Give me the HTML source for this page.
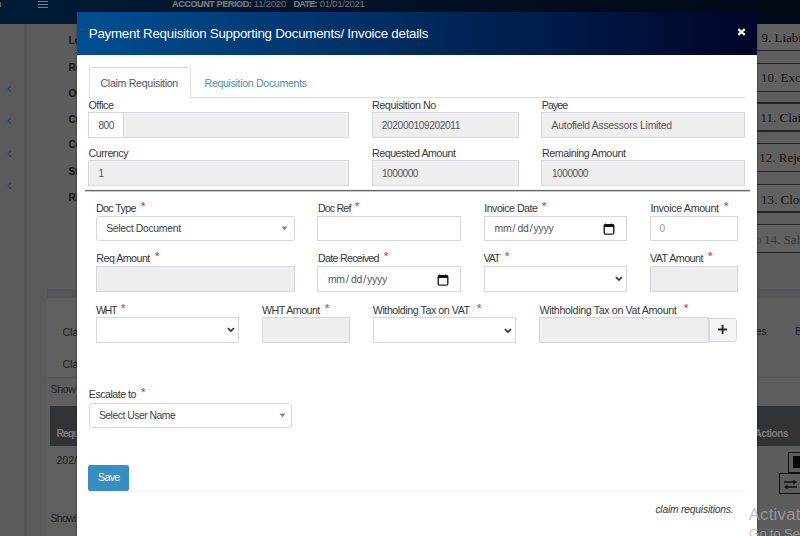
<!DOCTYPE html><html><head><meta charset="utf-8"><style>
*{margin:0;padding:0;box-sizing:border-box}
html,body{width:800px;height:536px;overflow:hidden}
body{position:relative;background:#5d5d5d;font-family:"Liberation Sans",sans-serif;}
div,span,svg{position:absolute;white-space:nowrap}
</style></head><body>
<div style="left:0.00px;top:0.00px;width:800.00px;height:24.00px;background:linear-gradient(to right,#001c36,#020816)"></div>
<div style="left:0.00px;top:24.00px;width:26.00px;height:512.00px;background:#5a5a5a"></div>
<div style="left:24.00px;top:24.00px;width:3.00px;height:512.00px;background:linear-gradient(to right,#585858,#525252,#555657)"></div>
<div style="left:27.00px;top:24.00px;width:20.00px;height:512.00px;background:#5a5b5c"></div>
<svg style="left:7px;top:85.4px" width="5" height="8" viewBox="0 0 5 8"><path d="M3.8 0.8 L1.1 3.8 L3.8 6.8" fill="none" stroke="#34475b" stroke-width="1.2"/></svg>
<svg style="left:7px;top:117.2px" width="5" height="8" viewBox="0 0 5 8"><path d="M3.8 0.8 L1.1 3.8 L3.8 6.8" fill="none" stroke="#34475b" stroke-width="1.2"/></svg>
<svg style="left:7px;top:149.7px" width="5" height="8" viewBox="0 0 5 8"><path d="M3.8 0.8 L1.1 3.8 L3.8 6.8" fill="none" stroke="#34475b" stroke-width="1.2"/></svg>
<svg style="left:7px;top:181.5px" width="5" height="8" viewBox="0 0 5 8"><path d="M3.8 0.8 L1.1 3.8 L3.8 6.8" fill="none" stroke="#34475b" stroke-width="1.2"/></svg>
<div style="left:38.00px;top:1.00px;width:10.00px;height:1.00px;background:#7d7c7a"></div>
<div style="left:38.00px;top:4.00px;width:10.00px;height:1.00px;background:#7d7c7a"></div>
<div style="left:38.00px;top:7.00px;width:10.00px;height:1.00px;background:#7d7c7a"></div>
<div style="left:0.00px;top:1.50px;width:1.20px;height:5.50px;background:#6a5a42"></div>
<div style="left:172.00px;top:-2.00px;font-size:9px;line-height:12px;color:#77787b;font-family:'Liberation Sans',sans-serif;font-weight:bold;letter-spacing:-0.373px;-webkit-text-stroke:0.2px #77787b;">ACCOUNT PERIOD:</div>
<div style="left:253.80px;top:-3.00px;font-size:9.6px;line-height:14px;color:#707277;font-family:'Liberation Sans',sans-serif;letter-spacing:-0.256px;">11/2020</div>
<div style="left:293.50px;top:-2.00px;font-size:9px;line-height:12px;color:#77787b;font-family:'Liberation Sans',sans-serif;font-weight:bold;letter-spacing:-0.726px;-webkit-text-stroke:0.2px #77787b;">DATE:</div>
<div style="left:319.70px;top:-3.00px;font-size:9.6px;line-height:14px;color:#707277;font-family:'Liberation Sans',sans-serif;letter-spacing:-0.305px;">01/01/2021</div>
<div style="left:68.40px;top:34.00px;font-size:10.2px;line-height:14px;color:#161616;font-family:'Liberation Sans',sans-serif;font-weight:bold;">Lo</div>
<div style="left:68.40px;top:61.00px;font-size:10.2px;line-height:14px;color:#161616;font-family:'Liberation Sans',sans-serif;font-weight:bold;">Re</div>
<div style="left:68.40px;top:87.00px;font-size:10.2px;line-height:14px;color:#161616;font-family:'Liberation Sans',sans-serif;font-weight:bold;">Or</div>
<div style="left:68.40px;top:113.00px;font-size:10.2px;line-height:14px;color:#161616;font-family:'Liberation Sans',sans-serif;font-weight:bold;">Cu</div>
<div style="left:68.40px;top:138.00px;font-size:10.2px;line-height:14px;color:#161616;font-family:'Liberation Sans',sans-serif;font-weight:bold;">Co</div>
<div style="left:68.40px;top:165.00px;font-size:10.2px;line-height:14px;color:#161616;font-family:'Liberation Sans',sans-serif;font-weight:bold;">St</div>
<div style="left:68.40px;top:191.00px;font-size:10.2px;line-height:14px;color:#161616;font-family:'Liberation Sans',sans-serif;font-weight:bold;">Ri</div>
<div style="left:47.00px;top:289.30px;width:30.00px;height:8.70px;background:#545658"></div>
<div style="left:47.00px;top:298.00px;width:30.00px;height:238.00px;background:#5f5f5f"></div>
<div style="left:47.00px;top:376.50px;width:30.00px;height:1.00px;background:#555657"></div>
<div style="left:62.50px;top:325.00px;font-size:10.5px;line-height:14px;color:#1e1e1e;font-family:'Liberation Sans',sans-serif;">Cla</div>
<div style="left:62.50px;top:357.00px;font-size:10.5px;line-height:14px;color:#1e1e1e;font-family:'Liberation Sans',sans-serif;">Cla</div>
<div style="left:50.50px;top:382.00px;font-size:10.5px;line-height:14px;color:#222;font-family:'Liberation Sans',sans-serif;letter-spacing:-0.317px;">Show</div>
<div style="left:50.00px;top:406.00px;width:27.00px;height:40.00px;background:#323334"></div>
<div style="left:56.50px;top:426.00px;font-size:10.5px;line-height:14px;color:#7b7c7e;font-family:'Liberation Sans',sans-serif;font-weight:bold;letter-spacing:-1.063px;">Requ</div>
<div style="left:56.50px;top:453.00px;font-size:10.5px;line-height:14px;color:#1e1e1e;font-family:'Liberation Sans',sans-serif;">202/</div>
<div style="left:50.50px;top:511.00px;font-size:10.5px;line-height:14px;color:#222;font-family:'Liberation Sans',sans-serif;letter-spacing:-0.720px;">Showi</div>
<div style="left:757.00px;top:24.00px;width:43.00px;height:228.60px;background:#5e5e5e"></div>
<div style="left:757.00px;top:24.00px;width:43.00px;height:26.35px;background:#616161"></div>
<div style="left:757.00px;top:49.85px;width:43.00px;height:1.20px;background:#242424"></div>
<div style="left:761.50px;top:29.00px;font-size:13px;line-height:18px;color:#121212;font-family:'Liberation Serif',serif;">9. Liabi</div>
<div style="left:757.00px;top:63.20px;width:43.00px;height:28.00px;background:#616161"></div>
<div style="left:757.00px;top:90.70px;width:43.00px;height:1.20px;background:#242424"></div>
<div style="left:757.00px;top:62.70px;width:43.00px;height:1.20px;background:#242424"></div>
<div style="left:761.00px;top:69.00px;font-size:13px;line-height:18px;color:#121212;font-family:'Liberation Serif',serif;">10. Exc</div>
<div style="left:757.00px;top:102.90px;width:43.00px;height:28.00px;background:#616161"></div>
<div style="left:757.00px;top:130.40px;width:43.00px;height:1.20px;background:#242424"></div>
<div style="left:757.00px;top:102.40px;width:43.00px;height:1.20px;background:#242424"></div>
<div style="left:760.50px;top:109.00px;font-size:13px;line-height:18px;color:#121212;font-family:'Liberation Serif',serif;">11. Clai</div>
<div style="left:757.00px;top:143.20px;width:43.00px;height:28.30px;background:#616161"></div>
<div style="left:757.00px;top:171.00px;width:43.00px;height:1.20px;background:#242424"></div>
<div style="left:757.00px;top:142.70px;width:43.00px;height:1.20px;background:#242424"></div>
<div style="left:759.30px;top:149.00px;font-size:13px;line-height:18px;color:#121212;font-family:'Liberation Serif',serif;">12. Reje</div>
<div style="left:757.00px;top:184.40px;width:43.00px;height:27.50px;background:#616161"></div>
<div style="left:757.00px;top:211.40px;width:43.00px;height:1.20px;background:#242424"></div>
<div style="left:757.00px;top:183.90px;width:43.00px;height:1.20px;background:#242424"></div>
<div style="left:761.00px;top:191.00px;font-size:13px;line-height:18px;color:#121212;font-family:'Liberation Serif',serif;">13. Clos</div>
<div style="left:757.00px;top:224.60px;width:43.00px;height:28.00px;background:#616161"></div>
<div style="left:757.00px;top:252.10px;width:43.00px;height:1.20px;background:#242424"></div>
<div style="left:757.00px;top:224.10px;width:43.00px;height:1.20px;background:#242424"></div>
<div style="left:764.00px;top:231.00px;font-size:13px;line-height:18px;color:#3a3a3a;font-family:'Liberation Serif',serif;">14. Salv</div>
<div style="left:755.00px;top:231.00px;font-size:13px;line-height:18px;color:#3a3a3a;font-family:'Liberation Serif',serif;">o</div>
<div style="left:757.00px;top:289.30px;width:43.00px;height:8.70px;background:#545658"></div>
<div style="left:757.00px;top:298.00px;width:43.00px;height:108.00px;background:#5e5e5e"></div>
<div style="left:755.50px;top:324.00px;font-size:10.5px;line-height:14px;color:#1e1e1e;font-family:'Liberation Sans',sans-serif;">es</div>
<div style="left:795.00px;top:324.00px;font-size:10.5px;line-height:14px;color:#1e1e1e;font-family:'Liberation Sans',sans-serif;">B</div>
<div style="left:757.00px;top:376.50px;width:43.00px;height:1.00px;background:#555657"></div>
<div style="left:757.00px;top:406.00px;width:43.00px;height:40.00px;background:#323334"></div>
<div style="left:754.50px;top:427.00px;font-size:10px;line-height:14px;color:#7b7c7e;font-family:'Liberation Sans',sans-serif;font-weight:bold;letter-spacing:-0.453px;">Actions</div>
<div style="left:788.10px;top:452.20px;width:13.90px;height:21.00px;border:1.3px solid #111"></div>
<div style="left:792.50px;top:456.40px;width:9.50px;height:12.10px;background:#080808"></div>
<div style="left:779.20px;top:473.00px;width:22.80px;height:21.40px;border:1.3px solid #111"></div>
<svg style="left:782.5px;top:478.5px" width="15" height="10" viewBox="0 0 15 10"><path d="M1 3.1 H11 M14 8 H4" stroke="#111" stroke-width="1.5"/><path d="M10.5 0.8 L14 3.1 L10.5 5.4 Z M4.5 5.7 L1 8 L4.5 10.3 Z" fill="#111"/></svg>
<div style="left:77.00px;top:12.30px;width:680.00px;height:527.70px;background:#fff;box-shadow:0 0 3px rgba(0,0,0,0.35)"></div>
<div style="left:77.00px;top:12.30px;width:680.00px;height:42.30px;background:linear-gradient(to right,#004f92,#000428)"></div>
<div style="left:88.75px;top:25.00px;font-size:13.3px;line-height:18px;color:#fff;font-family:'Liberation Sans',sans-serif;letter-spacing:-0.231px;">Payment Requisition Supporting Documents/ Invoice details</div>
<svg style="left:737px;top:27.5px" width="9" height="8" viewBox="0 0 9 8"><path d="M1.3 1.1 L7.7 6.9 M7.7 1.1 L1.3 6.9" stroke="#fff" stroke-width="2.1" stroke-linecap="butt"/></svg>
<div style="left:88.50px;top:96.60px;width:656.90px;height:1.00px;background:#dedede"></div>
<div style="left:88.5px;top:67px;width:102px;height:30.6px;border:1px solid #dedede;border-bottom:none;border-radius:3px 3px 0 0;background:#fff"></div>
<div style="left:100.50px;top:76.00px;font-size:10.6px;line-height:14px;color:#555;font-family:'Liberation Sans',sans-serif;letter-spacing:-0.293px;">Claim Requisition</div>
<div style="left:204.60px;top:76.00px;font-size:10.6px;line-height:14px;color:#4a8fc0;font-family:'Liberation Sans',sans-serif;letter-spacing:-0.329px;">Requisition Documents</div>
<div style="left:88.50px;top:98.00px;font-size:10.7px;line-height:14px;color:#383838;font-family:'Liberation Sans',sans-serif;letter-spacing:-0.459px;">Office</div>
<div style="left:372.00px;top:98.00px;font-size:10.7px;line-height:14px;color:#383838;font-family:'Liberation Sans',sans-serif;letter-spacing:-0.399px;">Requisition No</div>
<div style="left:541.80px;top:98.00px;font-size:10.7px;line-height:14px;color:#383838;font-family:'Liberation Sans',sans-serif;letter-spacing:-0.968px;">Payee</div>
<div style="left:88.40px;top:112.40px;width:35.20px;height:26.10px;border:1px solid #d6d8dd;background:#fff;"></div>
<div style="left:123.10px;top:112.40px;width:225.50px;height:26.10px;border:1px solid #d6d8dd;background:#eee;"></div>
<div style="left:98.40px;top:119.00px;font-size:10.2px;line-height:14px;color:#555;font-family:'Liberation Sans',sans-serif;letter-spacing:-0.540px;">800</div>
<div style="left:372.20px;top:112.40px;width:146.60px;height:26.10px;border:1px solid #d6d8dd;background:#eee;"></div>
<div style="left:381.80px;top:119.00px;font-size:10.2px;line-height:14px;color:#555;font-family:'Liberation Sans',sans-serif;letter-spacing:-0.396px;">202000109202011</div>
<div style="left:541.30px;top:112.40px;width:204.10px;height:26.10px;border:1px solid #d6d8dd;background:#eee;"></div>
<div style="left:551.60px;top:119.00px;font-size:10.4px;line-height:14px;color:#555;font-family:'Liberation Sans',sans-serif;letter-spacing:-0.255px;">Autofield Assessors Limited</div>
<div style="left:88.50px;top:146.00px;font-size:10.7px;line-height:14px;color:#383838;font-family:'Liberation Sans',sans-serif;letter-spacing:-0.476px;">Currency</div>
<div style="left:371.90px;top:146.00px;font-size:10.7px;line-height:14px;color:#383838;font-family:'Liberation Sans',sans-serif;letter-spacing:-0.457px;">Requested Amount</div>
<div style="left:541.90px;top:146.00px;font-size:10.7px;line-height:14px;color:#383838;font-family:'Liberation Sans',sans-serif;letter-spacing:-0.419px;">Remaining Amount</div>
<div style="left:88.40px;top:160.00px;width:260.40px;height:25.50px;border:1px solid #d6d8dd;background:#eee;"></div>
<div style="left:98.50px;top:167.00px;font-size:10.2px;line-height:14px;color:#555;font-family:'Liberation Sans',sans-serif;">1</div>
<div style="left:372.20px;top:160.00px;width:146.60px;height:25.50px;border:1px solid #d6d8dd;background:#eee;"></div>
<div style="left:381.90px;top:167.00px;font-size:10.2px;line-height:14px;color:#555;font-family:'Liberation Sans',sans-serif;letter-spacing:-0.502px;">1000000</div>
<div style="left:541.30px;top:160.00px;width:204.10px;height:25.50px;border:1px solid #d6d8dd;background:#eee;"></div>
<div style="left:551.90px;top:167.00px;font-size:10.2px;line-height:14px;color:#555;font-family:'Liberation Sans',sans-serif;letter-spacing:-0.502px;">1000000</div>
<div style="left:84.75px;top:190.00px;width:664.95px;height:1.00px;background:#686868"></div>
<div style="left:84.75px;top:191.00px;width:664.95px;height:1.00px;background:#c8c8c8"></div>
<div style="left:84.75px;top:189.00px;width:664.95px;height:1.00px;background:#f0f0f0"></div>
<div style="left:95.90px;top:201.00px;font-size:10.7px;line-height:14px;color:#383838;font-family:'Liberation Sans',sans-serif;letter-spacing:-0.626px;">Doc Type</div>
<svg style="left:141.00px;top:201.80px" width="4.3" height="4.3" viewBox="0 0 5 5"><path d="M2.5 2.6 L2.5 0.3 M2.5 2.6 L4.7 1.9 M2.5 2.6 L3.9 4.5 M2.5 2.6 L1.1 4.5 M2.5 2.6 L0.3 1.9" stroke="#f23c64" stroke-width="1.15" stroke-linecap="round"/></svg>
<div style="left:317.90px;top:201.00px;font-size:10.7px;line-height:14px;color:#383838;font-family:'Liberation Sans',sans-serif;letter-spacing:-0.850px;">Doc Ref</div>
<svg style="left:355.40px;top:201.80px" width="4.3" height="4.3" viewBox="0 0 5 5"><path d="M2.5 2.6 L2.5 0.3 M2.5 2.6 L4.7 1.9 M2.5 2.6 L3.9 4.5 M2.5 2.6 L1.1 4.5 M2.5 2.6 L0.3 1.9" stroke="#f23c64" stroke-width="1.15" stroke-linecap="round"/></svg>
<div style="left:484.20px;top:201.00px;font-size:10.7px;line-height:14px;color:#383838;font-family:'Liberation Sans',sans-serif;letter-spacing:-0.515px;">Invoice Date</div>
<svg style="left:542.30px;top:201.80px" width="4.3" height="4.3" viewBox="0 0 5 5"><path d="M2.5 2.6 L2.5 0.3 M2.5 2.6 L4.7 1.9 M2.5 2.6 L3.9 4.5 M2.5 2.6 L1.1 4.5 M2.5 2.6 L0.3 1.9" stroke="#f23c64" stroke-width="1.15" stroke-linecap="round"/></svg>
<div style="left:650.40px;top:201.00px;font-size:10.7px;line-height:14px;color:#383838;font-family:'Liberation Sans',sans-serif;letter-spacing:-0.347px;">Invoice Amount</div>
<svg style="left:723.50px;top:201.80px" width="4.3" height="4.3" viewBox="0 0 5 5"><path d="M2.5 2.6 L2.5 0.3 M2.5 2.6 L4.7 1.9 M2.5 2.6 L3.9 4.5 M2.5 2.6 L1.1 4.5 M2.5 2.6 L0.3 1.9" stroke="#f23c64" stroke-width="1.15" stroke-linecap="round"/></svg>
<div style="left:95.90px;top:216.40px;width:199.10px;height:24.20px;border:1px solid #d6d8dd;background:#fff;border-radius:3px"></div>
<div style="left:106.20px;top:222.00px;font-size:10.4px;line-height:14px;color:#444;font-family:'Liberation Sans',sans-serif;letter-spacing:-0.306px;">Select Document</div>
<svg style="left:281px;top:225.5px" width="7" height="5" viewBox="0 0 7 5"><path d="M0.5 0.5 H6.5 L3.5 4.5 Z" fill="#888"/></svg>
<div style="left:317.30px;top:216.40px;width:143.40px;height:24.20px;border:1px solid #d6d8dd;background:#fff;"></div>
<div style="left:483.50px;top:216.40px;width:143.30px;height:24.20px;border:1px solid #d6d8dd;background:#fff;"></div>
<div style="left:649.90px;top:216.40px;width:87.90px;height:24.20px;border:1px solid #d6d8dd;background:#fff;"></div>
<div style="left:659.60px;top:222.00px;font-size:10.2px;line-height:14px;color:#999;font-family:'Liberation Sans',sans-serif;letter-spacing:-0.373px;">0</div>
<div style="left:96.30px;top:251.00px;font-size:10.7px;line-height:14px;color:#383838;font-family:'Liberation Sans',sans-serif;letter-spacing:-0.539px;">Req Amount</div>
<svg style="left:154.80px;top:251.90px" width="4.3" height="4.3" viewBox="0 0 5 5"><path d="M2.5 2.6 L2.5 0.3 M2.5 2.6 L4.7 1.9 M2.5 2.6 L3.9 4.5 M2.5 2.6 L1.1 4.5 M2.5 2.6 L0.3 1.9" stroke="#f23c64" stroke-width="1.15" stroke-linecap="round"/></svg>
<div style="left:318.10px;top:251.00px;font-size:10.7px;line-height:14px;color:#383838;font-family:'Liberation Sans',sans-serif;letter-spacing:-0.730px;">Date Received</div>
<svg style="left:384.00px;top:251.90px" width="4.3" height="4.3" viewBox="0 0 5 5"><path d="M2.5 2.6 L2.5 0.3 M2.5 2.6 L4.7 1.9 M2.5 2.6 L3.9 4.5 M2.5 2.6 L1.1 4.5 M2.5 2.6 L0.3 1.9" stroke="#f23c64" stroke-width="1.15" stroke-linecap="round"/></svg>
<div style="left:483.50px;top:251.00px;font-size:10.7px;line-height:14px;color:#383838;font-family:'Liberation Sans',sans-serif;letter-spacing:-1.074px;">VAT</div>
<svg style="left:504.50px;top:251.90px" width="4.3" height="4.3" viewBox="0 0 5 5"><path d="M2.5 2.6 L2.5 0.3 M2.5 2.6 L4.7 1.9 M2.5 2.6 L3.9 4.5 M2.5 2.6 L1.1 4.5 M2.5 2.6 L0.3 1.9" stroke="#f23c64" stroke-width="1.15" stroke-linecap="round"/></svg>
<div style="left:650.00px;top:251.00px;font-size:10.7px;line-height:14px;color:#383838;font-family:'Liberation Sans',sans-serif;letter-spacing:-0.539px;">VAT Amount</div>
<svg style="left:708.30px;top:251.90px" width="4.3" height="4.3" viewBox="0 0 5 5"><path d="M2.5 2.6 L2.5 0.3 M2.5 2.6 L4.7 1.9 M2.5 2.6 L3.9 4.5 M2.5 2.6 L1.1 4.5 M2.5 2.6 L0.3 1.9" stroke="#f23c64" stroke-width="1.15" stroke-linecap="round"/></svg>
<div style="left:95.90px;top:266.40px;width:199.10px;height:25.30px;border:1px solid #d6d8dd;background:#eee;"></div>
<div style="left:317.30px;top:266.40px;width:143.40px;height:25.30px;border:1px solid #d6d8dd;background:#fff;"></div>
<div style="left:483.50px;top:266.40px;width:143.30px;height:25.30px;border:1px solid #d6d8dd;background:#fff;"></div>
<div style="left:649.90px;top:266.40px;width:87.90px;height:25.60px;border:1px solid #d6d8dd;background:#eee;"></div>
<div style="left:95.90px;top:303.00px;font-size:10.7px;line-height:14px;color:#383838;font-family:'Liberation Sans',sans-serif;letter-spacing:-1.354px;">WHT</div>
<svg style="left:121.20px;top:303.70px" width="4.3" height="4.3" viewBox="0 0 5 5"><path d="M2.5 2.6 L2.5 0.3 M2.5 2.6 L4.7 1.9 M2.5 2.6 L3.9 4.5 M2.5 2.6 L1.1 4.5 M2.5 2.6 L0.3 1.9" stroke="#f23c64" stroke-width="1.15" stroke-linecap="round"/></svg>
<div style="left:262.00px;top:303.00px;font-size:10.7px;line-height:14px;color:#383838;font-family:'Liberation Sans',sans-serif;letter-spacing:-0.563px;">WHT Amount</div>
<svg style="left:325.00px;top:303.70px" width="4.3" height="4.3" viewBox="0 0 5 5"><path d="M2.5 2.6 L2.5 0.3 M2.5 2.6 L4.7 1.9 M2.5 2.6 L3.9 4.5 M2.5 2.6 L1.1 4.5 M2.5 2.6 L0.3 1.9" stroke="#f23c64" stroke-width="1.15" stroke-linecap="round"/></svg>
<div style="left:372.80px;top:303.00px;font-size:10.7px;line-height:14px;color:#383838;font-family:'Liberation Sans',sans-serif;letter-spacing:-0.450px;">Witholding Tax on VAT</div>
<svg style="left:476.90px;top:303.70px" width="4.3" height="4.3" viewBox="0 0 5 5"><path d="M2.5 2.6 L2.5 0.3 M2.5 2.6 L4.7 1.9 M2.5 2.6 L3.9 4.5 M2.5 2.6 L1.1 4.5 M2.5 2.6 L0.3 1.9" stroke="#f23c64" stroke-width="1.15" stroke-linecap="round"/></svg>
<div style="left:539.50px;top:303.00px;font-size:10.7px;line-height:14px;color:#383838;font-family:'Liberation Sans',sans-serif;letter-spacing:-0.366px;">Withholding Tax on Vat Amount</div>
<svg style="left:684.10px;top:303.70px" width="4.3" height="4.3" viewBox="0 0 5 5"><path d="M2.5 2.6 L2.5 0.3 M2.5 2.6 L4.7 1.9 M2.5 2.6 L3.9 4.5 M2.5 2.6 L1.1 4.5 M2.5 2.6 L0.3 1.9" stroke="#f23c64" stroke-width="1.15" stroke-linecap="round"/></svg>
<div style="left:95.90px;top:317.30px;width:142.80px;height:26.10px;border:1px solid #d6d8dd;background:#fff;"></div>
<div style="left:261.80px;top:317.30px;width:88.10px;height:26.00px;border:1px solid #d6d8dd;background:#eee;"></div>
<div style="left:372.80px;top:317.30px;width:142.90px;height:26.10px;border:1px solid #d6d8dd;background:#fff;"></div>
<div style="left:539.10px;top:317.30px;width:170.20px;height:26.10px;border:1px solid #d6d8dd;background:#eee;"></div>
<div style="left:708.60px;top:317.80px;width:28.00px;height:24.30px;border:1px solid #d6d8dd;background:#f4f4f4;border-radius:0 3px 3px 0"></div>
<svg style="left:718px;top:324.7px" width="9.2" height="9" viewBox="0 0 9.2 9"><path d="M4.6 0 V9 M0 4.5 H9.2" stroke="#2b2b2b" stroke-width="2"/></svg>
<div style="left:494.60px;top:222.00px;font-size:10.4px;line-height:14px;color:#555;font-family:'Liberation Sans',sans-serif;letter-spacing:-0.364px;">mm</div>
<div style="left:512.60px;top:222.00px;font-size:10.4px;line-height:14px;color:#555;font-family:'Liberation Sans',sans-serif;">/</div>
<div style="left:517.60px;top:222.00px;font-size:10.4px;line-height:14px;color:#555;font-family:'Liberation Sans',sans-serif;letter-spacing:-0.334px;">dd</div>
<div style="left:529.80px;top:222.00px;font-size:10.4px;line-height:14px;color:#555;font-family:'Liberation Sans',sans-serif;">/</div>
<div style="left:533.60px;top:222.00px;font-size:10.4px;line-height:14px;color:#555;font-family:'Liberation Sans',sans-serif;letter-spacing:-0.200px;">yyyy</div>
<div style="left:328.00px;top:273.00px;font-size:10.4px;line-height:14px;color:#555;font-family:'Liberation Sans',sans-serif;letter-spacing:-0.364px;">mm</div>
<div style="left:346.00px;top:273.00px;font-size:10.4px;line-height:14px;color:#555;font-family:'Liberation Sans',sans-serif;">/</div>
<div style="left:351.00px;top:273.00px;font-size:10.4px;line-height:14px;color:#555;font-family:'Liberation Sans',sans-serif;letter-spacing:-0.334px;">dd</div>
<div style="left:363.20px;top:273.00px;font-size:10.4px;line-height:14px;color:#555;font-family:'Liberation Sans',sans-serif;">/</div>
<div style="left:367.00px;top:273.00px;font-size:10.4px;line-height:14px;color:#555;font-family:'Liberation Sans',sans-serif;letter-spacing:-0.200px;">yyyy</div>
<svg style="left:614.80px;top:276.30px" width="8" height="6" viewBox="0 0 8 6"><path d="M0.9 1.1 L3.9 4.1 L6.9 1.1" fill="none" stroke="#3a3a3a" stroke-width="1.8"/></svg>
<svg style="left:226.80px;top:327.30px" width="8" height="6" viewBox="0 0 8 6"><path d="M0.9 1.1 L3.9 4.1 L6.9 1.1" fill="none" stroke="#3a3a3a" stroke-width="1.8"/></svg>
<svg style="left:503.80px;top:327.60px" width="8" height="6" viewBox="0 0 8 6"><path d="M0.9 1.1 L3.9 4.1 L6.9 1.1" fill="none" stroke="#3a3a3a" stroke-width="1.8"/></svg>
<svg style="left:602.70px;top:222.00px" width="12" height="13" viewBox="0 0 12 13"><path d="M2.4 1.3 L3.4 2.6 M8.8 1.3 L7.8 2.6" stroke="#333" stroke-width="0.8"/><rect x="1.2" y="2.6" width="9.6" height="9.5" rx="1.4" fill="none" stroke="#222" stroke-width="1.4"/><rect x="0.9" y="2.2" width="10.2" height="2.9" rx="0.8" fill="#111"/></svg>
<svg style="left:436.60px;top:273.00px" width="12" height="13" viewBox="0 0 12 13"><path d="M2.4 1.3 L3.4 2.6 M8.8 1.3 L7.8 2.6" stroke="#333" stroke-width="0.8"/><rect x="1.2" y="2.6" width="9.6" height="9.5" rx="1.4" fill="none" stroke="#222" stroke-width="1.4"/><rect x="0.9" y="2.2" width="10.2" height="2.9" rx="0.8" fill="#111"/></svg>
<div style="left:88.80px;top:387.00px;font-size:10.7px;line-height:14px;color:#383838;font-family:'Liberation Sans',sans-serif;letter-spacing:-0.522px;">Escalate to</div>
<svg style="left:140.80px;top:388.00px" width="4.3" height="4.3" viewBox="0 0 5 5"><path d="M2.5 2.6 L2.5 0.3 M2.5 2.6 L4.7 1.9 M2.5 2.6 L3.9 4.5 M2.5 2.6 L1.1 4.5 M2.5 2.6 L0.3 1.9" stroke="#f23c64" stroke-width="1.15" stroke-linecap="round"/></svg>
<div style="left:88.50px;top:402.70px;width:203.30px;height:25.40px;border:1px solid #d6d8dd;background:#fff;border-radius:3px"></div>
<div style="left:98.90px;top:409.00px;font-size:10.4px;line-height:14px;color:#444;font-family:'Liberation Sans',sans-serif;letter-spacing:-0.493px;">Select User Name</div>
<svg style="left:278.5px;top:412.5px" width="7" height="5" viewBox="0 0 7 5"><path d="M0.5 0.5 H6.5 L3.5 4.5 Z" fill="#888"/></svg>
<div style="left:88.50px;top:490.60px;width:656.90px;height:1.00px;background:#f2f2f2"></div>
<div style="left:88.00px;top:465.30px;width:41.10px;height:25.50px;background:#3a8dc0;border-radius:2.5px"></div>
<div style="left:98.10px;top:470.00px;font-size:10.6px;line-height:14px;color:#fff;font-family:'Liberation Sans',sans-serif;letter-spacing:-0.665px;">Save</div>
<div style="left:655.40px;top:503.00px;font-size:10.3px;line-height:14px;color:#3a3a3a;font-family:'Liberation Sans',sans-serif;font-style:italic;letter-spacing:-0.203px;">claim requisitions.</div>
<div style="left:748.70px;top:503.00px;font-size:16.6px;line-height:24px;color:rgba(175,175,175,0.72);font-family:'Liberation Sans',sans-serif;letter-spacing:0.312px;">Activat</div>
<div style="left:749.00px;top:525.00px;font-size:13.5px;line-height:18px;color:rgba(175,175,175,0.72);font-family:'Liberation Sans',sans-serif;letter-spacing:-0.337px;">Go to Set</div>
</body></html>
